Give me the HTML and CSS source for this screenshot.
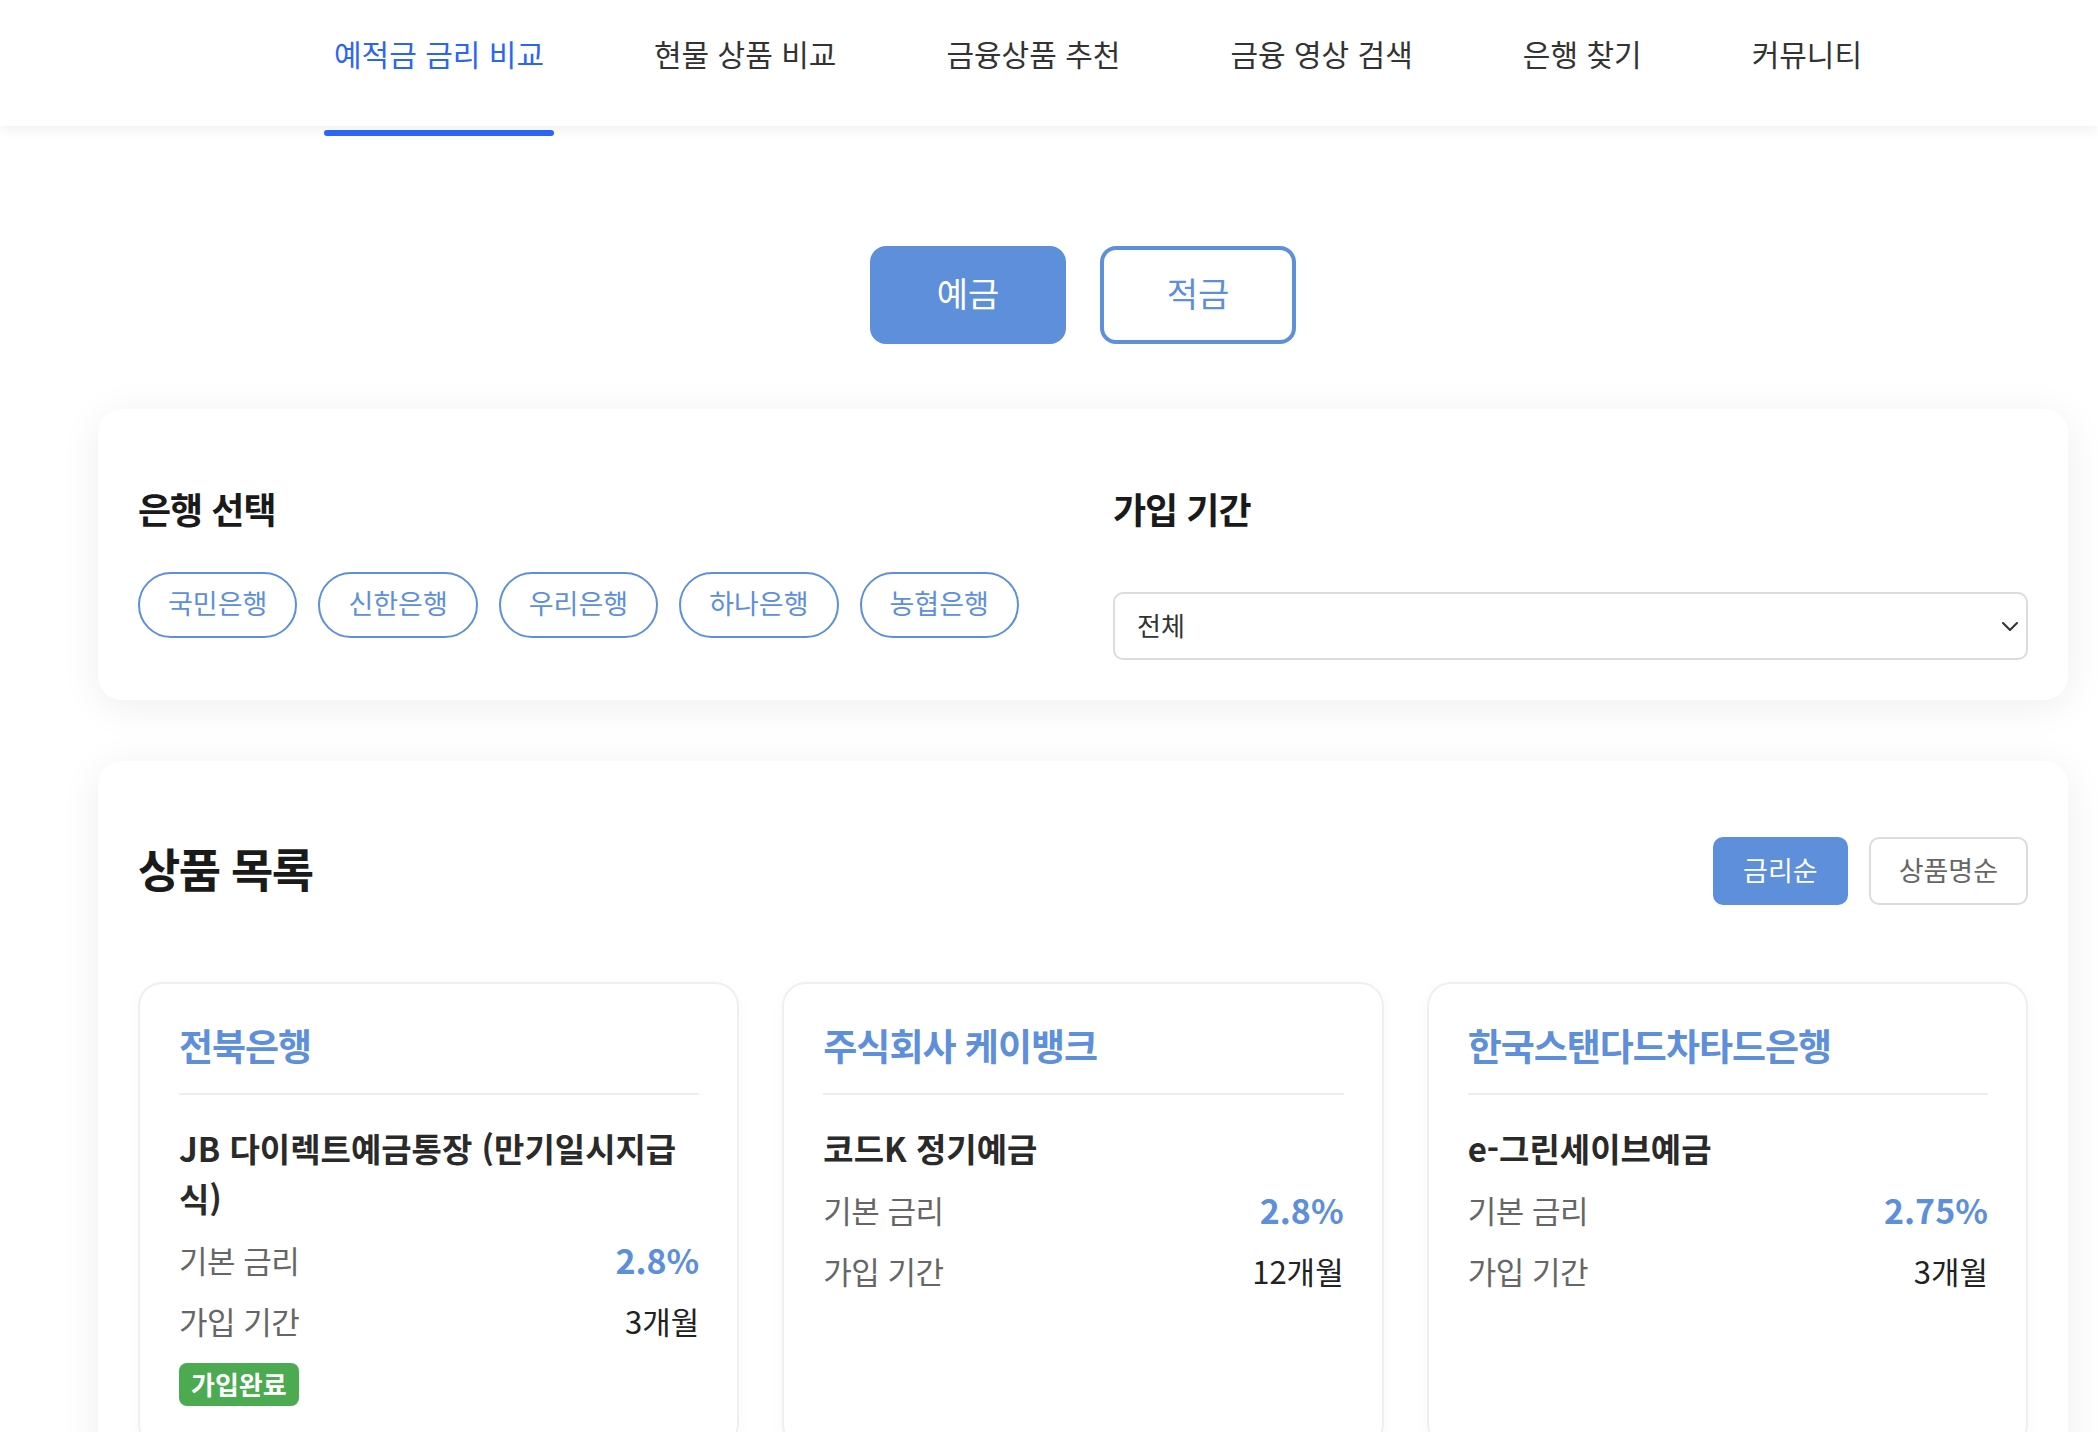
FILE: index.html
```html
<!DOCTYPE html>
<html lang="ko">
<head>
<meta charset="utf-8">
<title>예적금 금리 비교</title>
<link rel="stylesheet" href="styles.css">
</head>
<body>
<header class="topbar">
  <nav class="nav">
    <a class="nav-item active">예적금 금리 비교</a>
    <a class="nav-item">현물 상품 비교</a>
    <a class="nav-item">금융상품 추천</a>
    <a class="nav-item">금융 영상 검색</a>
    <a class="nav-item">은행 찾기</a>
    <a class="nav-item">커뮤니티</a>
  </nav>
</header>

<main class="main">
  <div class="toggle">
    <button class="toggle-btn on">예금</button>
    <button class="toggle-btn">적금</button>
  </div>

  <section class="panel filter">
    <div class="filter-col">
      <h3 class="filter-title">은행 선택</h3>
      <div class="chips">
        <span class="chip">국민은행</span>
        <span class="chip">신한은행</span>
        <span class="chip">우리은행</span>
        <span class="chip">하나은행</span>
        <span class="chip">농협은행</span>
      </div>
    </div>
    <div class="filter-col">
      <h3 class="filter-title">가입 기간</h3>
      <div class="select">
        <span>전체</span>
        <svg class="chev" width="16" height="9" viewBox="0 0 16 9"><path d="M1 1 L8 8 L15 1" fill="none" stroke="#333" stroke-width="2" stroke-linecap="round" stroke-linejoin="round"/></svg>
      </div>
    </div>
  </section>

  <section class="panel list">
    <div class="list-head">
      <h2 class="list-title">상품 목록</h2>
      <div class="sorts">
        <button class="sort on">금리순</button>
        <button class="sort">상품명순</button>
      </div>
    </div>
    <div class="cards">
      <article class="card">
        <div class="bank">전북은행</div>
        <div class="prod">JB 다이렉트예금통장 (만기일시지급식)</div>
        <div class="row"><span class="lbl">기본 금리</span><span class="rate">2.8%</span></div>
        <div class="row"><span class="lbl">가입 기간</span><span class="val">3개월</span></div>
        <span class="badge">가입완료</span>
      </article>
      <article class="card">
        <div class="bank">주식회사 케이뱅크</div>
        <div class="prod">코드K 정기예금</div>
        <div class="row"><span class="lbl">기본 금리</span><span class="rate">2.8%</span></div>
        <div class="row"><span class="lbl">가입 기간</span><span class="val">12개월</span></div>
      </article>
      <article class="card">
        <div class="bank">한국스탠다드차타드은행</div>
        <div class="prod">e-그린세이브예금</div>
        <div class="row"><span class="lbl">기본 금리</span><span class="rate">2.75%</span></div>
        <div class="row"><span class="lbl">가입 기간</span><span class="val">3개월</span></div>
      </article>
    </div>
  </section>
</main>
</body>
</html>
```

FILE: styles.css
```css
* { box-sizing: border-box; }
html, body { margin: 0; padding: 0; }
body {
  background: #ffffff;
  font-family: "Noto Sans CJK KR", "Noto Sans", sans-serif;
  color: #222;
}
button { font-family: inherit; cursor: pointer; }

.topbar {
  height: 126px;
  background: #fff;
  box-shadow: 0 4px 12px rgba(0,0,0,0.06);
  position: relative;
  z-index: 2;
}
.nav {
  display: flex;
  padding-left: 324px;
  gap: 90px;
}
.nav-item {
  position: relative;
  display: block;
  height: 126px;
  padding: 32px 10px 0;
  font-size: 30px;
  line-height: 42px;
  color: #333;
  white-space: nowrap;
}
.nav-item.active { color: #2b66f3; }
.nav-item.active::after {
  content: "";
  position: absolute;
  left: 0;
  right: 0;
  top: 130px;
  height: 6px;
  border-radius: 3px;
  background: #2b66f3;
}

.main {
  padding: 120px 30px 40px 98px;
}
.toggle {
  display: flex;
  justify-content: center;
  gap: 34px;
}
.toggle-btn {
  width: 196px;
  height: 98px;
  padding: 0 0 6px;
  border-radius: 16px;
  border: 4px solid #5e8fda;
  background: #fff;
  color: #5e8fda;
  font-size: 34px;
}
.toggle-btn.on { background: #5e8fda; color: #fff; }

.panel {
  background: #fff;
  border-radius: 24px;
  box-shadow: 0 6px 40px rgba(0,0,0,0.07);
  padding: 40px;
}
.filter {
  margin-top: 65px;
  display: grid;
  grid-template-columns: 1fr 1fr;
  gap: 60px;
}
.filter-title {
  margin: 38px 0 42px;
  font-size: 36px;
  line-height: 43px;
  font-weight: 700;
  color: #1a1a1a;
  letter-spacing: -1px;
}
.chips { display: flex; gap: 21px; }
.chip {
  display: inline-flex;
  align-items: center;
  height: 66px;
  padding: 0 28px 5px;
  border: 2px solid #5e8fda;
  border-radius: 33px;
  color: #5e8fda;
  font-size: 27px;
}
.select {
  margin-top: 62px;
  height: 68px;
  border: 2px solid #dcdcdc;
  border-radius: 10px;
  display: flex;
  align-items: center;
  justify-content: space-between;
  padding: 0 8px 4px 22px;
  font-size: 26px;
  color: #333;
}
.chev { margin-top: 4px; }

.list { margin-top: 61px; }
.list-head {
  margin-top: 36px;
  height: 68px;
  display: flex;
  justify-content: space-between;
  align-items: center;
}
.list-title {
  margin: 0;
  padding-bottom: 8px;
  font-size: 46px;
  line-height: 60px;
  font-weight: 700;
  color: #1a1a1a;
  letter-spacing: -1.5px;
}
.sorts { display: flex; gap: 21px; }
.sort {
  height: 68px;
  padding: 0 28px 4px;
  border: 2px solid #dcdcdc;
  border-radius: 10px;
  background: #fff;
  color: #666;
  font-size: 27px;
}
.sort.on { background: #5e8fda; border-color: #5e8fda; color: #fff; }

.cards {
  margin-top: 77px;
  display: grid;
  grid-template-columns: repeat(3, 1fr);
  gap: 43px;
}
.card {
  border: 2px solid #efefef;
  border-radius: 24px;
  padding: 40px 38px 40px 39px;
  box-shadow: 0 4px 16px rgba(0,0,0,0.03);
  display: flex;
  flex-direction: column;
  align-items: stretch;
}
.bank {
  font-size: 37px;
  line-height: 43px;
  font-weight: 700;
  color: #5e8fda;
  letter-spacing: -1px;
  padding-bottom: 26px;
  border-bottom: 2px solid #eeeeee;
}
.prod {
  margin-top: 28px;
  margin-bottom: 6px;
  font-size: 33px;
  line-height: 50px;
  font-weight: 700;
  color: #2a2a2a;
}
.row {
  display: flex;
  justify-content: space-between;
  align-items: center;
  height: 61px;
}
.lbl { font-size: 31px; color: #666; letter-spacing: -0.5px; }
.rate { font-size: 34px; font-weight: 700; color: #5e8fda; }
.val { font-size: 31px; color: #222; }
.badge {
  align-self: flex-start;
  margin-top: 12px;
  height: 43px;
  padding: 0 12px 3px;
  display: inline-flex;
  align-items: center;
  border-radius: 8px;
  background: #4caa50;
  color: #fff;
  font-size: 26px;
  font-weight: 700;
}
```
